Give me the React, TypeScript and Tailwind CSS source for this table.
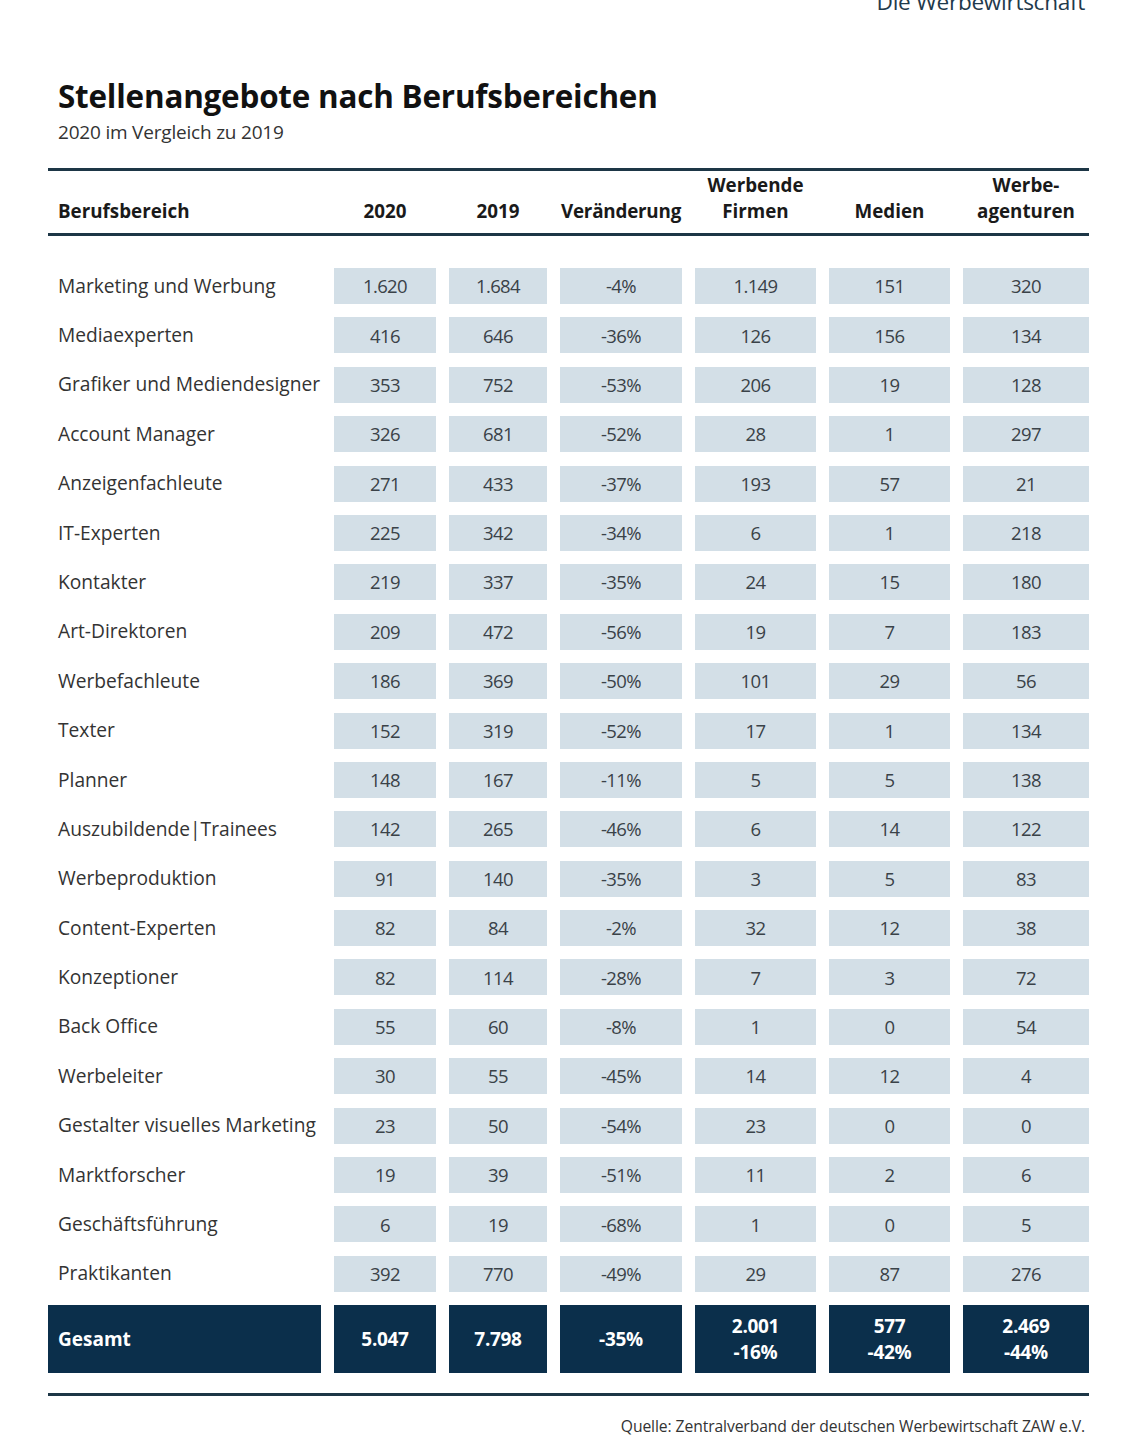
import React from "react";

type Row = {
  name: string;
  values: string[];
};

const rows: Row[] = [
  { name: "Marketing und Werbung", values: ["1.620", "1.684", "-4%", "1.149", "151", "320"] },
  { name: "Mediaexperten", values: ["416", "646", "-36%", "126", "156", "134"] },
  { name: "Grafiker und Mediendesigner", values: ["353", "752", "-53%", "206", "19", "128"] },
  { name: "Account Manager", values: ["326", "681", "-52%", "28", "1", "297"] },
  { name: "Anzeigenfachleute", values: ["271", "433", "-37%", "193", "57", "21"] },
  { name: "IT-Experten", values: ["225", "342", "-34%", "6", "1", "218"] },
  { name: "Kontakter", values: ["219", "337", "-35%", "24", "15", "180"] },
  { name: "Art-Direktoren", values: ["209", "472", "-56%", "19", "7", "183"] },
  { name: "Werbefachleute", values: ["186", "369", "-50%", "101", "29", "56"] },
  { name: "Texter", values: ["152", "319", "-52%", "17", "1", "134"] },
  { name: "Planner", values: ["148", "167", "-11%", "5", "5", "138"] },
  { name: "Auszubildende|Trainees", values: ["142", "265", "-46%", "6", "14", "122"] },
  { name: "Werbeproduktion", values: ["91", "140", "-35%", "3", "5", "83"] },
  { name: "Content-Experten", values: ["82", "84", "-2%", "32", "12", "38"] },
  { name: "Konzeptioner", values: ["82", "114", "-28%", "7", "3", "72"] },
  { name: "Back Office", values: ["55", "60", "-8%", "1", "0", "54"] },
  { name: "Werbeleiter", values: ["30", "55", "-45%", "14", "12", "4"] },
  { name: "Gestalter visuelles Marketing", values: ["23", "50", "-54%", "23", "0", "0"] },
  { name: "Marktforscher", values: ["19", "39", "-51%", "11", "2", "6"] },
  { name: "Geschäftsführung", values: ["6", "19", "-68%", "1", "0", "5"] },
  { name: "Praktikanten", values: ["392", "770", "-49%", "29", "87", "276"] },
];

const totals: string[][] = [
  ["5.047"],
  ["7.798"],
  ["-35%"],
  ["2.001", "-16%"],
  ["577", "-42%"],
  ["2.469", "-44%"],
];

const cols = "grid grid-cols-[273px_102px_98px_122px_121px_121px_126px] gap-x-[13px]";

export default function App() {
  return (
    <div className="w-[1128px] h-[1453px] bg-white overflow-hidden font-['Open_Sans',sans-serif] text-[#333]">
      {/* Brand line, cut at top */}
      <div className="flex justify-end pr-[43px] -mt-[11px]">
        <span className="text-[22.6px] leading-[26px] text-[#1f3a4c] tracking-[-0.3px]">Die Werbewirtschaft</span>
      </div>

      <div className="pl-[48px] pr-[39px]">
        {/* Title */}
        <div className="pl-[10px] mt-[62px]">
          <h1 className="text-[31.4px] leading-[38px] font-bold text-[#111] tracking-[-0.2px]">
            Stellenangebote nach Berufsbereichen
          </h1>
          <p className="text-[19px] leading-[24px] text-[#333] mt-[5px] tracking-[-0.2px]">2020 im Vergleich zu 2019</p>
        </div>

        {/* Header */}
        <div className="mt-[24px] border-t-[3px] border-b-[3px] border-[#1d3646] pt-[1px] pb-[9px]">
          <div className={`${cols} items-end text-[18.8px] leading-[26px] font-bold text-[#1a1a1a]`}>
            <div className="pl-[10px]">Berufsbereich</div>
            <div className="text-center">2020</div>
            <div className="text-center">2019</div>
            <div className="text-center tracking-[-0.2px]">Veränderung</div>
            <div className="text-center">
              Werbende
              <br />
              Firmen
            </div>
            <div className="text-center">Medien</div>
            <div className="text-center">
              Werbe-
              <br />
              agenturen
            </div>
          </div>
        </div>

        {/* Body */}
        <div className={`${cols} gap-y-[13.4px] mt-[32px]`}>
          {rows.map((row) => (
            <React.Fragment key={row.name}>
              <div className="h-[36px] flex items-center pl-[10px] text-[19.2px] text-[#333] whitespace-nowrap">
                {row.name}
              </div>
              {row.values.map((v, i) => (
                <div
                  key={i}
                  className="h-[36px] flex items-center justify-center bg-[#d3dfe7] text-[18.5px] text-[#3a4248] tracking-[-0.6px]"
                >
                  {v}
                </div>
              ))}
            </React.Fragment>
          ))}
        </div>

        {/* Totals */}
        <div className={`${cols} mt-[13px]`}>
          <div className="h-[68px] flex items-center pl-[10px] bg-[#0b2f4b] text-white font-bold text-[19px]">
            Gesamt
          </div>
          {totals.map((t, i) => (
            <div
              key={i}
              className="h-[68px] flex flex-col items-center justify-center bg-[#0b2f4b] text-white font-bold text-[19px] leading-[26px] tracking-[-0.3px]"
            >
              {t.map((line) => (
                <span key={line}>{line}</span>
              ))}
            </div>
          ))}
        </div>

        {/* Bottom rule and source */}
        <div className="mt-[20px] border-t-[3px] border-[#1d3646]" />
        <div className="flex justify-end pr-[4px] mt-[20px]">
          <span className="text-[15.7px] leading-[20px] text-[#333] tracking-[-0.1px]">
            Quelle: Zentralverband der deutschen Werbewirtschaft ZAW e.V.
          </span>
        </div>
      </div>
    </div>
  );
}
